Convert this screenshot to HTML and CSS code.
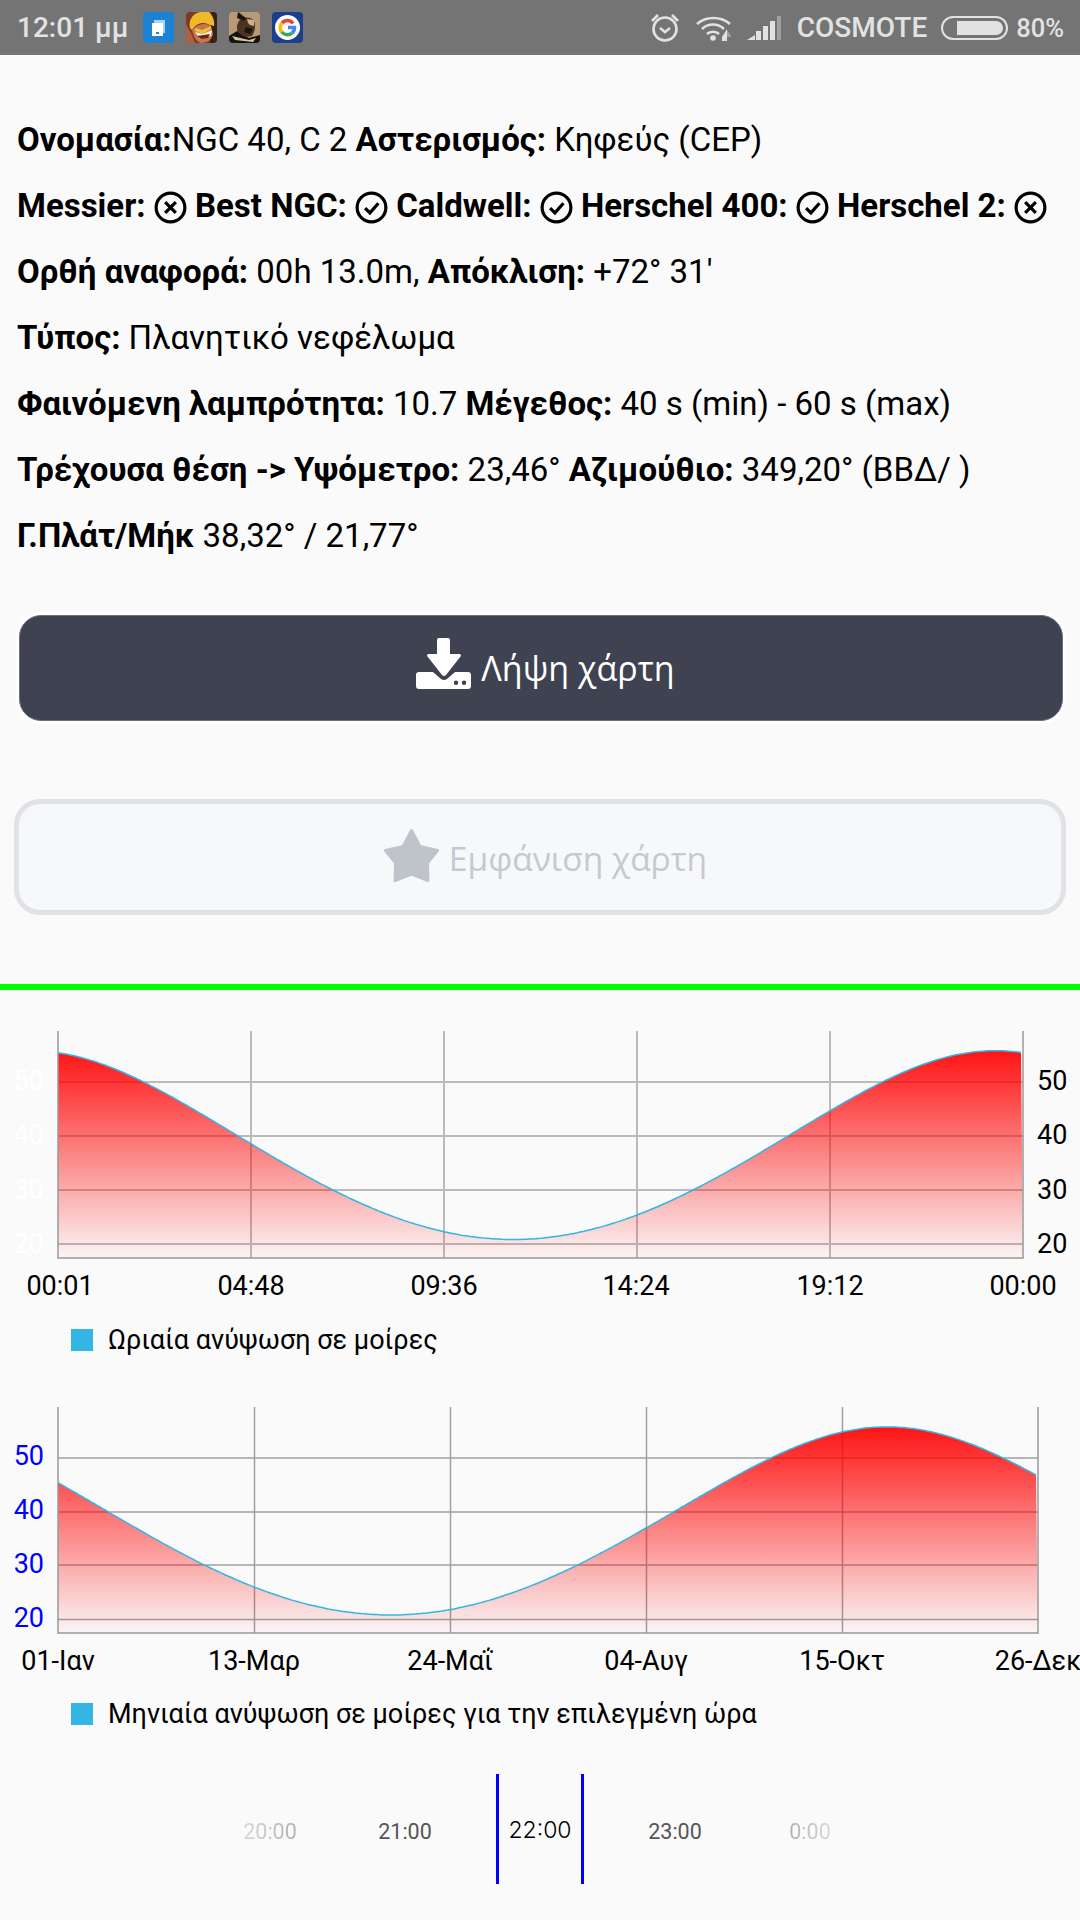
FILE: index.html
```html
<!DOCTYPE html>
<html lang="el">
<head>
<meta charset="utf-8">
<title>NGC 40</title>
<link rel="stylesheet" href="styles.css">
</head>
<body>
<header class="status">
  <span class="clock">12:01 μμ</span>
  <div class="apps">
    <svg class="app" viewBox="0 0 31 31"><rect width="31" height="31" rx="3" fill="#1c82d4"/><rect x="11" y="8" width="11" height="13" fill="#a9d2f1"/><rect x="9" y="11" width="11" height="13" fill="#fff"/><rect x="13" y="20" width="3" height="2" fill="#1c82d4"/></svg>
    <svg class="app" viewBox="0 0 31 31"><rect width="31" height="31" rx="4" fill="#7d3a28"/><path d="M0 12L6 23L9 31H3Q0 31 0 28Z" fill="#b0603f"/><path d="M25 0H27Q31 0 31 4V27Q31 31 27 31H24Z" fill="#35201a"/><path d="M4 16C2 7 8 0 16 0H23C27 4 29 9 28 14L24 13C18 9 10 11 6 18Z" fill="#efba2a"/><path d="M6 18C11 12 19 10 25 14L27 22C26 27 22 31 15 31C11 30 8 26 6 18Z" fill="#c9764f"/><path d="M9 16L16 18L25 14L25 17L17 22L9 19Z" fill="#e9c13b"/><path d="M9 20L17 22L26 18L25 24L14 27Z" fill="#fbf3dc"/><path d="M11 24L24 22L22 26L15 27Z" fill="#6e2219"/></svg>
    <svg class="app" viewBox="0 0 31 31"><rect width="31" height="31" rx="4" fill="#b89b76"/><path d="M0 31V24L8 19L14 23L20 26L31 23V27Q31 31 27 31H4Q0 31 0 27Z" fill="#15120f"/><path d="M10 9C13 5 21 4 25 9C27 14 26 19 23 24C18 26 12 24 9 20C7 16 8 12 10 9Z" fill="#4c3220"/><path d="M9 0L17 6L15 9L8 6Z" fill="#1b1510"/><path d="M18 7L25 8L25 14L21 13L19 11Z" fill="#c9b48a"/><path d="M17 15L24 17L21 22L15 20Z" fill="#1c1410"/><path d="M3 24L20 28L27 26L24 30L6 28Z" fill="#cfc7a2"/></svg>
    <svg class="app" viewBox="0 0 31 31"><rect width="31" height="31" rx="4" fill="#1b3f8b"/><circle cx="15.500" cy="15.500" r="12.500" fill="#fff"/><path d="M21 11.500A7 7 0 0 0 10 11" class="g-red"/><path d="M10 11A7 7 0 0 0 9.800 20" class="g-yellow"/><path d="M9.800 20A7 7 0 0 0 20 21" class="g-green"/><path d="M20 21A7 7 0 0 0 22.500 15.500H16" class="g-blue"/></svg>
  </div>
  <div class="sys">
    <svg class="alarm" viewBox="0 0 30 29"><circle cx="15" cy="16" r="11.500"/><path d="M10 15L15 19L20 15"/><path d="M2 8L8 2"/><path d="M28 8L22 2"/></svg>
    <svg class="wifi" viewBox="0 0 35 26"><path d="M1 9C10 1 25 1 34 9"/><path d="M6 14C12 8 22 8 28 14"/><path d="M11 19C14 16 20 16 23 19"/><circle cx="17" cy="23" r="2.800" class="solid"/><path d="M26 22L31 14V26H26Z" class="solid"/><path d="M31 15L36 22H31Z" class="dim"/></svg>
    <svg class="signal" viewBox="0 0 34 24"><path d="M0 24L8 19V24Z" class="bar"/><path d="M9 15H14V24H9Z" class="bar"/><path d="M16 10H21V24H16Z" class="bar"/><path d="M23 5H28V24H23Z" class="bar"/><path d="M30 0H34V24H30Z" class="bar-off"/></svg>
    <span class="carrier">COSMOTE</span>
    <div class="battery"><div class="battery-level"></div></div>
    <span class="percent">80%</span>
  </div>
</header>

<main>
  <section class="details">
    <p class="row"><b>Ονομασία:</b>NGC 40, C 2 <b>Αστερισμός:</b> Κηφεύς (CEP)</p>
    <p class="row"><b>Messier:</b> <svg class="mark" viewBox="0 0 31 31"><circle cx="15.500" cy="15.500" r="13.500"/><path d="M10.500 10.500L20.500 20.500M20.500 10.500L10.500 20.500"/></svg> <b>Best NGC:</b> <svg class="mark" viewBox="0 0 31 31"><circle cx="15.500" cy="15.500" r="13.500"/><path d="M9.500 16L14 20.500L22 11.500"/></svg> <b>Caldwell:</b> <svg class="mark" viewBox="0 0 31 31"><circle cx="15.500" cy="15.500" r="13.500"/><path d="M9.500 16L14 20.500L22 11.500"/></svg> <b>Herschel 400:</b> <svg class="mark" viewBox="0 0 31 31"><circle cx="15.500" cy="15.500" r="13.500"/><path d="M9.500 16L14 20.500L22 11.500"/></svg> <b>Herschel 2:</b> <svg class="mark" viewBox="0 0 31 31"><circle cx="15.500" cy="15.500" r="13.500"/><path d="M10.500 10.500L20.500 20.500M20.500 10.500L10.500 20.500"/></svg></p>
    <p class="row"><b>Ορθή αναφορά:</b> 00h 13.0m, <b>Απόκλιση:</b> +72° 31'</p>
    <p class="row"><b>Τύπος:</b> Πλανητικό νεφέλωμα</p>
    <p class="row"><b>Φαινόμενη λαμπρότητα:</b> 10.7 <b>Μέγεθος:</b> 40 s (min) - 60 s (max)</p>
    <p class="row"><b>Τρέχουσα θέση -&gt; Υψόμετρο:</b> 23,46° <b>Αζιμούθιο:</b> 349,20° (ΒΒΔ/ )</p>
    <p class="row"><b>Γ.Πλάτ/Μήκ</b> 38,32° / 21,77°</p>
  </section>

  <button class="btn btn-dark" type="button">
    <svg class="btn-icon" viewBox="0 0 55 51"><path fill-rule="evenodd" d="M23 0H32Q34 0 34 2V16H43Q46 16 44.500 18.500L30 37Q28 39 26 37L11.500 18.500Q10 16 13 16H21V2Q21 0 23 0ZM3 34H17L25 41Q28 43 31 41L39 34H52Q55 34 55 37V48Q55 51 52 51H3Q0 51 0 48V37Q0 34 3 34ZM40 42.500A2.200 2.200 0 1 0 40 47A2.200 2.200 0 1 0 40 42.500ZM48 42.500A2.200 2.200 0 1 0 48 47A2.200 2.200 0 1 0 48 42.500Z"/></svg>
    <span>Λήψη χάρτη</span>
  </button>
  <button class="btn btn-off" type="button">
    <svg class="btn-icon" viewBox="0 0 55 53"><path d="M27.500 1.500L36 17.500L53.500 21.500L43.500 34L44 51.500L27.500 45L11 51.500L11.500 34L1.500 21.500L19 17.500Z"/></svg>
    <span>Εμφάνιση χάρτη</span>
  </button>

  <div class="rule"></div>

  <section class="chart-block">
    <svg class="chart chart-day" viewBox="0 990 1080 321" data-min-x="513" data-period="965" data-x0="58" data-x1="1023" data-y20="1244" data-scale="5.4" data-bottom="1258">
      <defs>
        <linearGradient id="fade" x1="0" y1="0" x2="0" y2="1">
          <stop offset="0" stop-color="#f00" stop-opacity=".92"/>
          <stop offset="1" stop-color="#f00" stop-opacity=".02"/>
        </linearGradient>
      </defs>
      <g class="grid thick">
        <path d="M58 1082H1023M58 1136H1023M58 1190H1023M58 1244H1023"/>
        <path d="M251 1031V1258M444 1031V1258M637 1031V1258M830 1031V1258"/>
      </g>
      <polygon class="area" fill="url(#fade)"/>
      <polyline class="line"/>
      <path class="axis" d="M58 1031V1258H1023V1031"/>
      <g class="ylab ylab-white"><text x="44" y="1090">50</text><text x="44" y="1144">40</text><text x="44" y="1199">30</text><text x="44" y="1253">20</text></g>
      <g class="ylab ylab-right"><text x="1037" y="1090">50</text><text x="1037" y="1144">40</text><text x="1037" y="1199">30</text><text x="1037" y="1253">20</text></g>
      <g class="xlab"><text x="60" y="1295">00:01</text><text x="251" y="1295">04:48</text><text x="444" y="1295">09:36</text><text x="636" y="1295">14:24</text><text x="830" y="1295">19:12</text><text x="1023" y="1295">00:00</text></g>
    </svg>
    <div class="legend"><i class="swatch"></i><span>Ωριαία ανύψωση σε μοίρες</span></div>
  </section>

  <section class="chart-block">
    <svg class="chart chart-year" viewBox="0 1369 1080 316" data-min-x="391" data-period="992" data-x0="58" data-x1="1038" data-y20="1619.5" data-scale="5.38" data-bottom="1633">
      <g class="grid">
        <path d="M58 1458H1038M58 1512H1038M58 1565H1038M58 1619.500H1038"/>
        <path d="M254.500 1407V1633M450.500 1407V1633M646.500 1407V1633M842.500 1407V1633"/>
      </g>
      <polygon class="area" fill="url(#fade)"/>
      <polyline class="line"/>
      <path class="axis" d="M58 1407V1633H1038V1407"/>
      <g class="ylab ylab-blue"><text x="44" y="1465">50</text><text x="44" y="1519">40</text><text x="44" y="1573">30</text><text x="44" y="1627">20</text></g>
      <g class="xlab"><text x="58" y="1670">01-Ιαν</text><text x="254" y="1670">13-Μαρ</text><text x="450" y="1670">24-Μαΐ</text><text x="646" y="1670">04-Αυγ</text><text x="842" y="1670">15-Οκτ</text><text x="1038" y="1670">26-Δεκ</text></g>
    </svg>
    <div class="legend"><i class="swatch"></i><span>Μηνιαία ανύψωση σε μοίρες για την επιλεγμένη ώρα</span></div>
  </section>

  <section class="picker">
    <span class="hour far-left">20:00</span>
    <span class="hour near">21:00</span>
    <span class="hour current">22:00</span>
    <span class="hour near">23:00</span>
    <span class="hour far-right">0:00</span>
  </section>
</main>
<script src="chart.js"></script>
</body>
</html>
```

FILE: styles.css
```css
* { box-sizing: border-box; }
html, body { margin: 0; padding: 0; }
body {
  width: 1080px;
  height: 1920px;
  overflow: hidden;
  background: #fafafa;
  color: #000;
  font-family: Roboto, "Noto Sans", sans-serif;
}

/* status bar */
.status {
  display: flex;
  align-items: center;
  height: 55px;
  padding: 0 16px 0 17px;
  background: #747474;
  color: #e2e2e2;
  font-size: 28px;
  font-weight: 500;
}
.clock { width: 126px; }
.apps { display: flex; gap: 12px; }
.app { display: block; width: 31px; height: 31px; }
.g-red, .g-yellow, .g-green, .g-blue { fill: none; stroke-width: 3.600; }
.g-red { stroke: #e94235; }
.g-yellow { stroke: #fabb05; }
.g-green { stroke: #34a853; }
.g-blue { stroke: #4285f4; }
.sys { display: flex; align-items: center; margin-left: auto; }
.alarm, .wifi { fill: none; stroke: #e2e2e2; stroke-width: 2.600; }
.alarm { width: 30px; height: 29px; margin-right: 16px; }
.wifi { width: 35px; height: 26px; margin-right: 16px; }
.wifi .solid { fill: #e2e2e2; stroke: none; }
.wifi .dim { fill: #a0a0a0; stroke: none; }
.signal { width: 34px; height: 24px; margin-right: 16px; }
.bar { fill: #e2e2e2; }
.bar-off { fill: #a0a0a0; }
.carrier { margin-right: 14px; }
.battery {
  width: 67px;
  height: 24px;
  margin-right: 8px;
  padding: 3px 3px 3px 14px;
  border: 2px solid #e2e2e2;
  border-radius: 12px;
}
.battery-level { height: 100%; border-radius: 0 8px 8px 0; background: #e2e2e2; }
.percent { font-size: 25.500px; }

/* details */
.details { padding: 52px 0 0 17px; font-size: 33px; }
.row { margin: 0; height: 66px; line-height: 66px; white-space: nowrap; }
.row b { font-weight: 700; }
.mark {
  width: 33px;
  height: 33px;
  vertical-align: -7px;
  fill: none;
  stroke: #000;
  stroke-width: 3;
}

/* buttons */
.btn {
  display: flex;
  align-items: center;
  justify-content: center;
  gap: 10px;
  font-family: "Open Sans", sans-serif;
  border-style: solid;
}
.btn-icon { display: block; }
.btn-dark {
  width: 1044px;
  height: 106px;
  margin: 46px 0 0 19px;
  padding: 0 0 0 9px;
  border-width: 1px;
  border-color: #6d707c;
  border-radius: 22px;
  background: #3e4251;
  color: #fff;
  font-size: 34px;
  box-shadow: 0 0 0 3px #fff;
}
.btn-dark .btn-icon { width: 55px; height: 51px; fill: #fff; margin-top: -10px; }
.btn-off {
  width: 1052px;
  height: 116px;
  margin: 78px 0 0 14px;
  padding: 2px 0 0 11px;
  border-width: 5px;
  border-color: #e0e2e6;
  border-radius: 26px;
  background: #f7f8fa;
  color: #c5c9d0;
  font-size: 33.500px;
}
.btn-off .btn-icon {
  width: 55px;
  height: 53px;
  fill: #bfc3ca;
  stroke: #bfc3ca;
  stroke-width: 3;
  stroke-linejoin: round;
  margin-top: -5px;
}
.rule { height: 6px; margin-top: 69px; background: #0f0; }

/* charts */
.chart-block { display: block; }
.chart { display: block; width: 1080px; }
.chart-day { height: 321px; }
.chart-year { height: 316px; }
.grid path { fill: none; stroke: #a0a0a0; stroke-width: 1.500; }
.grid.thick path { stroke: #bbb; stroke-width: 2; }
.axis { fill: none; stroke: #999; stroke-width: 1.500; }
.line { fill: none; stroke: #33b5e5; stroke-width: 1.500; }
.ylab text, .xlab text { font-size: 27px; }
.ylab text { text-anchor: end; }
.ylab-white text { fill: #fff; }
.ylab-blue text { fill: #00f; }
.ylab-right text { fill: #000; text-anchor: start; }
.xlab text { fill: #000; text-anchor: middle; }
.legend {
  display: flex;
  align-items: center;
  gap: 15px;
  height: 58px;
  padding-left: 71px;
  font-size: 27px;
}
.swatch { width: 22px; height: 22px; background: #33b5e5; }

/* hour picker */
.picker {
  display: grid;
  grid-template-columns: repeat(5, 135px);
  justify-content: center;
  align-items: center;
  justify-items: center;
  margin-top: 31px;
  height: 110px;
  font-size: 21.500px;
  padding-top: 4px;
}
.near { color: #555; }
.far-left, .far-right { -webkit-background-clip: text; background-clip: text; color: transparent; }
.far-left { background-image: linear-gradient(90deg, #d8d8d8, #b0b0b0); }
.far-right { background-image: linear-gradient(90deg, #b0b0b0, #d8d8d8); }
.current {
  display: flex;
  align-items: center;
  justify-content: center;
  width: 88px;
  height: 110px;
  margin-top: -4px;
  padding-top: 2px;
  border-left: 3px solid #00f;
  border-right: 3px solid #00f;
  color: #000;
  font-family: Inter, Roboto, sans-serif;
  font-size: 23px;
  font-weight: 300;
}
```

FILE: chart.js
```js
// Altitude of NGC 40 (dec +72.52) from latitude 38.32, sampled along each chart's x axis.
var RAD = Math.PI / 180;
var LAT = 38.32 * RAD;
var DEC = 72.52 * RAD;

function altitude(hourAngleDeg) {
  var s = Math.sin(LAT) * Math.sin(DEC) + Math.cos(LAT) * Math.cos(DEC) * Math.cos(hourAngleDeg * RAD);
  return Math.asin(s) / RAD;
}

document.querySelectorAll('.chart').forEach(function (svg) {
  var d = svg.dataset;
  var x0 = +d.x0, x1 = +d.x1, bottom = +d.bottom;
  var pts = [];
  for (var x = x0; x <= x1; x += 3) {
    var h = 180 + (x - d.minX) / d.period * 360;
    var y = d.y20 - (altitude(h) - 20) * d.scale;
    pts.push(x + ',' + y.toFixed(1));
  }
  svg.querySelector('.line').setAttribute('points', pts.join(' '));
  svg.querySelector('.area').setAttribute('points', x0 + ',' + bottom + ' ' + pts.join(' ') + ' ' + x1 + ',' + bottom);
});
```
